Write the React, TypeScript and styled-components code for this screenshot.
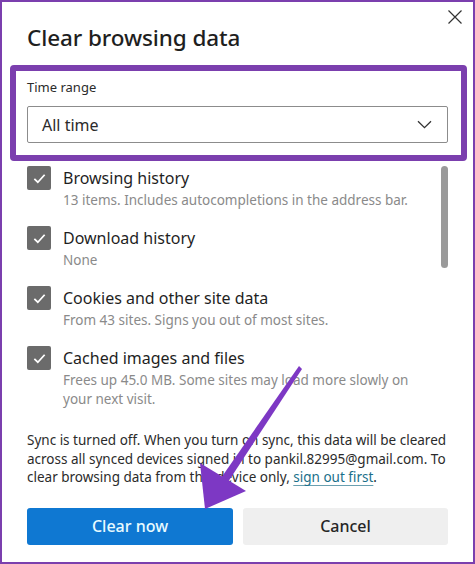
import styled, { createGlobalStyle } from 'styled-components';

// Clear browsing data dialog, with the purple annotation box and arrow on top

const PURPLE = '#7b3fae';

const GlobalStyle = createGlobalStyle`
  html, body {
    margin: 0;
    padding: 0;
    background: #ffffff;
  }
  body {
    font-family: 'Noto Sans', 'Open Sans', 'Liberation Sans', sans-serif;
    color: #1f1f1f;
  }
`;

const Frame = styled.div`
  position: relative;
  box-sizing: border-box;
  width: 475px;
  height: 564px;
  border: 2px solid ${PURPLE};
  background: #ffffff;
  padding: 0 25px;
  overflow: hidden;
`;

const Header = styled.div`
  display: flex;
  justify-content: space-between;
  align-items: flex-start;
  height: 63px;
`;

const Title = styled.h1`
  margin: 21px 0 0;
  font-size: 22.5px;
  font-weight: 500;
  line-height: 30px;
  color: #1f1f1f;
  letter-spacing: -0.1px;
`;

const CloseButton = styled.button`
  display: flex;
  margin: 7px -15px 0 0;
  padding: 0;
  border: 0;
  background: none;
  color: #333;
  cursor: pointer;
`;

// ── Time range (highlighted) ──────────────

const Highlight = styled.section`
  box-sizing: border-box;
  height: 96px;
  margin: 0 -19px 0 -17px;
  padding: 7px 13px 0 11px;
  border: 6px solid ${PURPLE};
  border-radius: 4px;
`;

const FieldLabel = styled.div`
  font-size: 13px;
  line-height: 18px;
  color: #2b2b2b;
  margin: 0 0 10px;
`;

const Select = styled.div`
  box-sizing: border-box;
  height: 37px;
  display: flex;
  align-items: center;
  justify-content: space-between;
  padding: 0 15px 0 14px;
  border: 1px solid #8c8c8c;
  border-radius: 2px;
  font-size: 16px;
  color: #2b2b2b;
`;

// ── Data types list ────────────────────────

const ListArea = styled.div`
  display: flex;
  gap: 12px;
  margin-top: 5px;
`;

const Items = styled.div`
  flex: 1;
  display: flex;
  flex-direction: column;
`;

const Item = styled.label`
  display: flex;
  gap: 12px;
  min-height: 60px;
`;

const Box = styled.span`
  flex: none;
  width: 24px;
  height: 24px;
  border-radius: 2px;
  background: #6b6b6b;
  display: flex;
  align-items: center;
  justify-content: center;
`;

const ItemText = styled.div`
  display: flex;
  flex-direction: column;
  padding-right: 8px;
`;

const ItemTitle = styled.span`
  font-size: 16px;
  line-height: 25px;
  color: #1f1f1f;
`;

const ItemDesc = styled.span`
  font-size: 13.5px;
  line-height: 19px;
  color: #8a8a8a;
`;

const ScrollThumb = styled.div`
  flex: none;
  width: 7px;
  height: 102px;
  border-radius: 4px;
  background: #9a9a9a;
`;

// ── Footer ────────────────────────────────

const SyncNote = styled.p`
  margin: 22px 0 0;
  font-size: 13.5px;
  line-height: 18.6px;
  color: #2b2b2b;
  white-space: nowrap;
`;

const Link = styled.a`
  color: #1a6f8a;
  text-decoration: underline;
  text-underline-offset: 3px;
  text-decoration-color: #6aa0b0;
`;

const Actions = styled.div`
  display: grid;
  grid-template-columns: 206px 205px;
  gap: 10px;
  margin-top: 21px;
`;

const Button = styled.button<{ $primary?: boolean }>`
  height: 37px;
  border: 0;
  border-radius: 3px;
  font-family: inherit;
  font-size: 16px;
  font-weight: 500;
  background: ${(p) => (p.$primary ? '#0f78d2' : '#efefef')};
  color: ${(p) => (p.$primary ? '#e8fbff' : '#262626')};
`;

const Arrow = styled.svg`
  position: absolute;
  left: 0;
  top: 0;
  pointer-events: none;
`;

const items = [
  { title: 'Browsing history', desc: '13 items. Includes autocompletions in the address bar.' },
  { title: 'Download history', desc: 'None' },
  { title: 'Cookies and other site data', desc: 'From 43 sites. Signs you out of most sites.' },
  { title: 'Cached images and files', desc: 'Frees up 45.0 MB. Some sites may load more slowly on your next visit.' },
];

function Check() {
  return (
    <svg width="15" height="15" viewBox="0 0 16 16">
      <path d="M2.5 8.5 6.2 12 13.5 4" fill="none" stroke="#fff" strokeWidth="1.9" />
    </svg>
  );
}

export default function App() {
  return (
    <>
      <GlobalStyle />
      <Frame>
        <Header>
          <Title>Clear browsing data</Title>
          <CloseButton aria-label="Close">
            <svg width="16" height="16" viewBox="0 0 16 16">
              <path d="M1.5 1.5 14.5 14.5 M14.5 1.5 1.5 14.5" stroke="#333" strokeWidth="1.2" />
            </svg>
          </CloseButton>
        </Header>

        <Highlight>
          <FieldLabel>Time range</FieldLabel>
          <Select>
            <span>All time</span>
            <svg width="15" height="9" viewBox="0 0 15 9">
              <path d="M1 1.2 7.5 7.7 14 1.2" fill="none" stroke="#333" strokeWidth="1.3" />
            </svg>
          </Select>
        </Highlight>

        <ListArea>
          <Items>
            {items.map((it) => (
              <Item key={it.title}>
                <Box>
                  <Check />
                </Box>
                <ItemText>
                  <ItemTitle>{it.title}</ItemTitle>
                  <ItemDesc>{it.desc}</ItemDesc>
                </ItemText>
              </Item>
            ))}
          </Items>
          <ScrollThumb />
        </ListArea>

        <SyncNote>
          Sync is turned off. When you turn on sync, this data will be cleared
          <br />
          across all synced devices signed in to pankil.82995@gmail.com. To
          <br />
          clear browsing data from this device only, <Link>sign out first</Link>.
        </SyncNote>

        <Actions>
          <Button $primary>Clear now</Button>
          <Button>Cancel</Button>
        </Actions>

        <Arrow width="475" height="564" viewBox="0 0 475 564">
          <path d="M297 364 L300 367 L226 480 L219 476 Z" fill="#7d38c4" />
          <path d="M203 507 L198 461 L244 489 Z" fill="#7d38c4" />
        </Arrow>
      </Frame>
    </>
  );
}
